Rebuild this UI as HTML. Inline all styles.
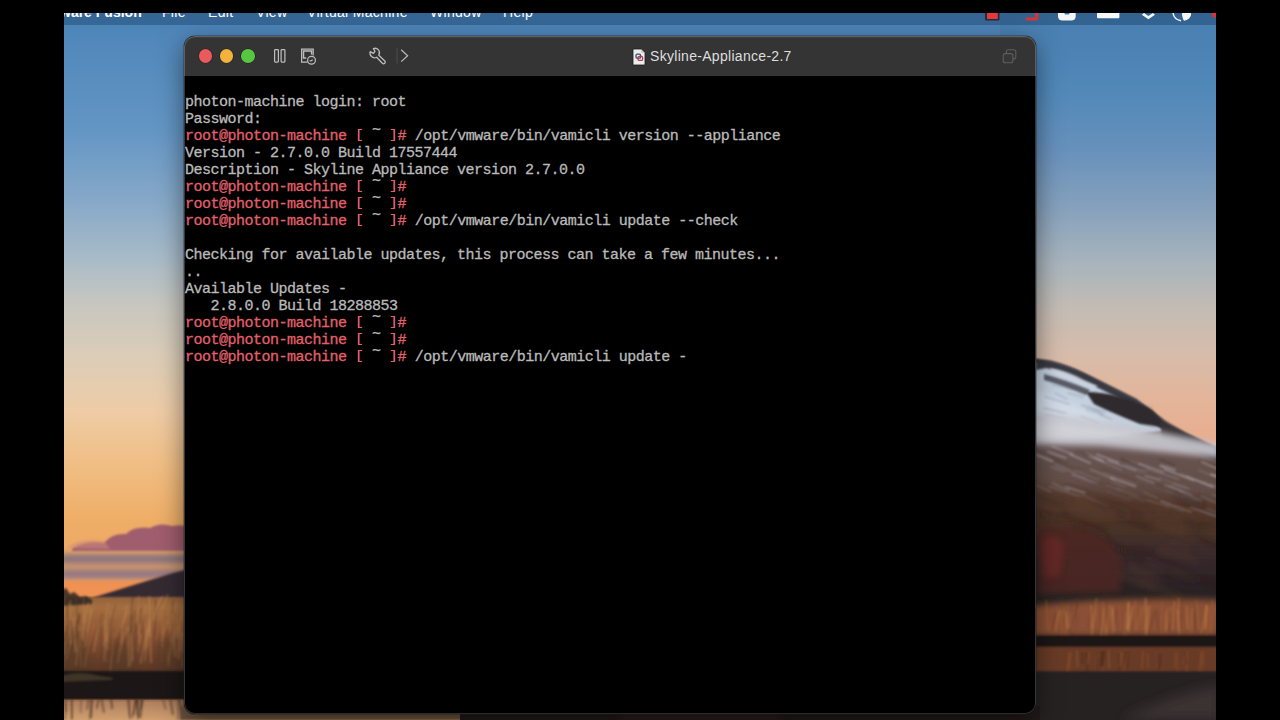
<!DOCTYPE html>
<html><head><meta charset="utf-8">
<style>
html,body{margin:0;padding:0;background:#000;width:1280px;height:720px;overflow:hidden;position:relative;}
.abs{position:absolute;}
.blk{position:absolute;background:#000;}
#menubar{position:absolute;left:64px;top:13px;width:1152px;height:11.5px;background:rgba(20,60,100,0.40);}
.mi{position:absolute;top:1.3px;font-family:"Liberation Sans",sans-serif;font-size:14px;letter-spacing:0.3px;line-height:22px;color:#fff;white-space:nowrap;}
#win{position:absolute;left:184px;top:36px;width:852px;height:678px;border-radius:11px;background:#000;overflow:hidden;
 box-shadow:0 0 0 0.5px rgba(20,30,40,0.6),0 8px 26px rgba(0,0,0,0.5);}
#tb{position:absolute;left:0;top:0;width:852px;height:40px;background:#343434;}
#ring{position:absolute;left:0;top:0;width:852px;height:678px;border-radius:11px;box-shadow:inset 0 0 0 1px rgba(255,255,255,0.17),inset 0 1px 0 1px rgba(255,255,255,0.06);}
.light{position:absolute;top:13.15px;width:13.5px;height:13.5px;border-radius:50%;box-shadow:0 0 0 0.6px rgba(0,0,0,0.35);}
#term{position:absolute;left:1px;top:58px;font-family:"Liberation Mono",monospace;font-size:15px;line-height:17px;letter-spacing:-0.5px;color:#bababa;white-space:pre;-webkit-text-stroke:0.3px currentColor;}
.t{position:relative;top:-6px;color:#bababa;}
.r{color:#e2606c;}
.br{display:inline-block;transform:scaleY(0.81);transform-origin:50% 1px;}
#title{position:absolute;left:466px;top:11px;font-family:"Liberation Sans",sans-serif;font-size:14px;letter-spacing:0.3px;line-height:18px;color:#dedede;white-space:nowrap;}
</style></head><body>
<svg id="wall" width="1280" height="720" viewBox="0 0 1280 720" style="position:absolute;left:0;top:0;">
<defs>
 <linearGradient id="gL" x1="0" y1="0" x2="0" y2="720" gradientUnits="userSpaceOnUse">
  <stop offset="0.0181" stop-color="#4a82b6"/>
  <stop offset="0.0417" stop-color="#4f86ba"/>
  <stop offset="0.1833" stop-color="#6496c4"/>
  <stop offset="0.2778" stop-color="#86a8c8"/>
  <stop offset="0.3542" stop-color="#a6bac8"/>
  <stop offset="0.4194" stop-color="#c6c6c0"/>
  <stop offset="0.4958" stop-color="#dccdb8"/>
  <stop offset="0.5708" stop-color="#eecca6"/>
  <stop offset="0.6556" stop-color="#f0bc80"/>
  <stop offset="0.7222" stop-color="#eeae68"/>
  <stop offset="0.8056" stop-color="#eea460"/>
 </linearGradient>
 <linearGradient id="gR" x1="0" y1="0" x2="0" y2="720" gradientUnits="userSpaceOnUse">
  <stop offset="0.0181" stop-color="#467cae"/>
  <stop offset="0.0417" stop-color="#4a80b2"/>
  <stop offset="0.1222" stop-color="#5088b8"/>
  <stop offset="0.2042" stop-color="#6690bc"/>
  <stop offset="0.2847" stop-color="#84a0bc"/>
  <stop offset="0.3653" stop-color="#a8b4bc"/>
  <stop offset="0.4306" stop-color="#c4bcb4"/>
  <stop offset="0.4958" stop-color="#d8bcaa"/>
  <stop offset="0.5597" stop-color="#e4b498"/>
  <stop offset="0.6083" stop-color="#e8ae90"/>
  <stop offset="0.6528" stop-color="#eaa888"/>
 </linearGradient>
 <linearGradient id="grassL" x1="0" y1="590" x2="0" y2="675" gradientUnits="userSpaceOnUse">
  <stop offset="0" stop-color="#84583a"/>
  <stop offset="0.2" stop-color="#a46e40"/>
  <stop offset="0.55" stop-color="#8a5234"/>
  <stop offset="1" stop-color="#5a3424"/>
 </linearGradient>
 <linearGradient id="reflL" x1="0" y1="695" x2="0" y2="720" gradientUnits="userSpaceOnUse">
  <stop offset="0" stop-color="#5a4030"/>
  <stop offset="0.3" stop-color="#b08060"/>
  <stop offset="1" stop-color="#d0a070"/>
 </linearGradient>
 <linearGradient id="mtnR" x1="0" y1="440" x2="0" y2="600" gradientUnits="userSpaceOnUse">
  <stop offset="0" stop-color="#6a5658"/>
  <stop offset="0.2" stop-color="#5e4236"/>
  <stop offset="0.5" stop-color="#4e3428"/>
  <stop offset="0.8" stop-color="#32262a"/>
  <stop offset="1" stop-color="#262022"/>
 </linearGradient>
 <linearGradient id="reflR" x1="0" y1="640" x2="0" y2="720" gradientUnits="userSpaceOnUse">
  <stop offset="0" stop-color="#1e1a18"/>
  <stop offset="0.15" stop-color="#6a4430"/>
  <stop offset="0.35" stop-color="#7a4c32"/>
  <stop offset="0.55" stop-color="#2e2624"/>
  <stop offset="1" stop-color="#3a3434"/>
 </linearGradient>
 <filter id="b1" x="-20%" y="-50%" width="140%" height="200%"><feGaussianBlur stdDeviation="1.2"/></filter>
 <filter id="b2" x="-20%" y="-50%" width="140%" height="200%"><feGaussianBlur stdDeviation="3"/></filter>
 <filter id="b3" x="-20%" y="-50%" width="140%" height="200%"><feGaussianBlur stdDeviation="6"/></filter>
</defs>
<!-- sky -->
<rect x="0" y="0" width="1000" height="720" fill="url(#gL)"/>
<rect x="1000" y="0" width="280" height="720" fill="url(#gR)"/>
<!-- LEFT clouds -->
<g filter="url(#b1)">
 <path d="M72 549 Q84 540 104 543 Q112 533 126 534 Q134 526 150 528 Q160 522 172 526 Q182 524 190 527 L190 551 L72 551 Z" fill="#9c5a6e" opacity="0.95"/>
 <path d="M66 548 Q80 537 104 541 L110 549 Z" fill="#cf8a7a" opacity="0.55"/>
</g>
<g filter="url(#b2)">
 <rect x="60" y="554" width="130" height="10" fill="#7a6c84" opacity="0.9"/>
 <rect x="60" y="569" width="130" height="10" fill="#84708a" opacity="0.9"/>
</g>
<rect x="60" y="581" width="130" height="16" fill="#f08c50" opacity="0.75" filter="url(#b1)"/>
<!-- LEFT mountain -->
<path d="M60 602 L92 598 Q130 586 160 577 Q175 572 190 569 L190 610 L60 610 Z" fill="#362a30" filter="url(#b1)"/>
<!-- LEFT grass -->
<rect x="60" y="597" width="130" height="78" fill="url(#grassL)" filter="url(#b1)"/>
<g fill="#4e3828" opacity="0.55" filter="url(#b3)">
<path d="M60 636 Q72 622 88 646 L94 675 L60 675 Z"/><path d="M104 648 Q120 628 136 652 L142 675 L100 675 Z"/><path d="M156 642 Q170 630 190 636 L190 675 L150 675 Z"/>
</g>
<path d="M60 600 L62 590 L66 588 L70 594 L74 592 L80 597 L86 596 L92 600 L92 604 L60 606 Z" fill="#2e2622" opacity="0.85" filter="url(#b1)"/>
<g stroke-width="1.3" filter="url(#b1)">
<path d="M140.5 663.6 Q143.2 643.6 149.7 623.7" stroke="#c89058" fill="none" opacity="0.48"/>
<path d="M128.8 667.0 Q128.6 647.3 128.3 627.6" stroke="#b8804a" fill="none" opacity="0.57"/>
<path d="M76.3 638.9 Q77.3 625.8 79.9 612.8" stroke="#4a3220" fill="none" opacity="0.34"/>
<path d="M154.1 634.9 Q156.6 622.6 162.3 610.3" stroke="#5a3c26" fill="none" opacity="0.31"/>
<path d="M162.4 635.0 Q161.8 617.3 160.2 599.6" stroke="#b8804a" fill="none" opacity="0.59"/>
<path d="M62.7 668.9 Q62.2 646.9 61.0 624.9" stroke="#c48a50" fill="none" opacity="0.35"/>
<path d="M183.1 652.5 Q182.8 634.0 182.0 615.6" stroke="#c89058" fill="none" opacity="0.32"/>
<path d="M183.6 629.9 Q184.1 619.6 185.4 609.3" stroke="#c48a50" fill="none" opacity="0.34"/>
<path d="M103.8 661.3 Q105.1 644.0 108.2 626.7" stroke="#c89058" fill="none" opacity="0.37"/>
<path d="M101.1 658.8 Q101.2 642.8 101.5 626.7" stroke="#5a3c26" fill="none" opacity="0.42"/>
<path d="M84.2 647.7 Q87.0 626.0 93.5 604.2" stroke="#a06a3c" fill="none" opacity="0.55"/>
<path d="M64.3 654.7 Q65.5 640.1 68.4 625.5" stroke="#b8804a" fill="none" opacity="0.41"/>
<path d="M151.2 662.8 Q150.5 640.9 148.8 618.9" stroke="#c48a50" fill="none" opacity="0.58"/>
<path d="M180.7 636.6 Q181.7 622.2 184.0 607.8" stroke="#7a5032" fill="none" opacity="0.41"/>
<path d="M136.3 654.4 Q136.4 639.8 136.5 625.2" stroke="#5a3c26" fill="none" opacity="0.58"/>
<path d="M73.5 642.9 Q76.1 625.3 82.3 607.6" stroke="#a06a3c" fill="none" opacity="0.35"/>
<path d="M150.5 634.8 Q150.6 616.3 150.8 597.7" stroke="#7a5032" fill="none" opacity="0.28"/>
<path d="M80.8 666.5 Q80.2 644.0 79.0 621.6" stroke="#b8804a" fill="none" opacity="0.28"/>
<path d="M137.7 651.7 Q139.6 641.3 144.0 630.9" stroke="#a06a3c" fill="none" opacity="0.54"/>
<path d="M119.4 632.3 Q122.1 621.6 128.2 610.9" stroke="#b8804a" fill="none" opacity="0.53"/>
<path d="M104.1 646.8 Q105.3 624.5 108.0 602.3" stroke="#c48a50" fill="none" opacity="0.47"/>
<path d="M161.3 629.1 Q160.7 613.7 159.4 598.3" stroke="#7a5032" fill="none" opacity="0.40"/>
<path d="M79.8 666.4 Q79.3 648.6 78.2 630.9" stroke="#4a3220" fill="none" opacity="0.41"/>
<path d="M123.5 655.2 Q123.5 639.2 123.6 623.2" stroke="#5a3c26" fill="none" opacity="0.57"/>
<path d="M76.2 660.2 Q75.7 643.5 74.7 626.9" stroke="#5a3c26" fill="none" opacity="0.55"/>
<path d="M84.7 646.6 Q85.8 630.1 88.4 613.7" stroke="#4a3220" fill="none" opacity="0.38"/>
<path d="M161.0 662.4 Q162.6 643.7 166.3 625.0" stroke="#7a5032" fill="none" opacity="0.36"/>
<path d="M132.5 661.6 Q132.4 641.2 132.2 620.7" stroke="#c89058" fill="none" opacity="0.50"/>
<path d="M182.6 632.1 Q184.9 619.8 190.5 607.6" stroke="#5a3c26" fill="none" opacity="0.44"/>
<path d="M93.6 652.4 Q95.8 636.7 101.0 620.9" stroke="#c89058" fill="none" opacity="0.49"/>
<path d="M106.9 633.6 Q109.7 619.3 116.1 605.0" stroke="#5a3c26" fill="none" opacity="0.37"/>
<path d="M168.2 666.0 Q171.1 647.4 177.9 628.8" stroke="#a06a3c" fill="none" opacity="0.43"/>
<path d="M128.7 641.6 Q131.4 621.1 137.8 600.6" stroke="#5a3c26" fill="none" opacity="0.35"/>
<path d="M71.9 651.3 Q73.3 636.0 76.6 620.8" stroke="#4a3220" fill="none" opacity="0.43"/>
<path d="M180.0 639.9 Q182.4 623.0 188.1 606.1" stroke="#a06a3c" fill="none" opacity="0.50"/>
<path d="M65.5 631.4 Q67.0 615.9 70.6 600.4" stroke="#c48a50" fill="none" opacity="0.52"/>
<path d="M84.7 667.4 Q87.7 645.1 94.5 622.7" stroke="#c48a50" fill="none" opacity="0.27"/>
<path d="M78.8 631.2 Q78.4 619.0 77.5 606.7" stroke="#b8804a" fill="none" opacity="0.40"/>
<path d="M106.2 642.3 Q105.9 631.4 105.1 620.5" stroke="#c89058" fill="none" opacity="0.57"/>
<path d="M62.1 637.2 Q62.6 623.7 63.8 610.2" stroke="#b8804a" fill="none" opacity="0.49"/>
<path d="M131.0 666.3 Q131.0 649.4 131.2 632.6" stroke="#a06a3c" fill="none" opacity="0.44"/>
<path d="M104.8 661.2 Q107.0 639.2 112.2 617.2" stroke="#5a3c26" fill="none" opacity="0.39"/>
<path d="M133.1 647.2 Q132.5 631.4 131.2 615.5" stroke="#5a3c26" fill="none" opacity="0.45"/>
<path d="M182.6 667.9 Q182.9 650.3 183.5 632.7" stroke="#c89058" fill="none" opacity="0.25"/>
<path d="M75.6 652.0 Q75.0 634.3 73.6 616.6" stroke="#c89058" fill="none" opacity="0.56"/>
<path d="M133.1 655.6 Q134.0 633.4 136.0 611.2" stroke="#5a3c26" fill="none" opacity="0.59"/>
<path d="M109.9 675.3 Q111.2 653.9 114.2 632.4" stroke="#a06a3c" fill="none" opacity="0.51"/>
<path d="M99.9 624.5 Q102.7 614.3 109.1 604.0" stroke="#a06a3c" fill="none" opacity="0.42"/>
<path d="M98.1 636.1 Q99.5 624.6 102.8 613.1" stroke="#5a3c26" fill="none" opacity="0.34"/>
<path d="M67.0 629.3 Q67.9 614.4 69.8 599.5" stroke="#4a3220" fill="none" opacity="0.35"/>
<path d="M179.8 651.4 Q179.8 638.3 179.6 625.3" stroke="#c48a50" fill="none" opacity="0.50"/>
<path d="M98.0 658.5 Q99.0 636.1 101.3 613.7" stroke="#7a5032" fill="none" opacity="0.46"/>
<path d="M155.7 637.7 Q155.7 618.2 155.9 598.7" stroke="#4a3220" fill="none" opacity="0.50"/>
<path d="M139.3 643.9 Q139.6 633.6 140.2 623.3" stroke="#c89058" fill="none" opacity="0.51"/>
<path d="M136.4 621.8 Q137.2 608.6 138.8 595.5" stroke="#b8804a" fill="none" opacity="0.56"/>
<path d="M130.7 634.0 Q131.3 614.3 132.7 594.6" stroke="#4a3220" fill="none" opacity="0.49"/>
<path d="M182.1 661.4 Q184.4 640.7 189.9 620.0" stroke="#5a3c26" fill="none" opacity="0.39"/>
<path d="M169.3 629.3 Q171.6 615.6 177.0 601.9" stroke="#b8804a" fill="none" opacity="0.36"/>
<path d="M62.4 659.7 Q63.9 642.4 67.5 625.2" stroke="#5a3c26" fill="none" opacity="0.57"/>
<path d="M80.0 646.9 Q80.9 630.0 82.9 613.1" stroke="#a06a3c" fill="none" opacity="0.44"/>
<path d="M115.6 636.9 Q117.5 626.3 121.9 615.7" stroke="#a06a3c" fill="none" opacity="0.54"/>
<path d="M161.8 641.2 Q163.6 630.9 167.9 620.5" stroke="#b8804a" fill="none" opacity="0.60"/>
<path d="M150.4 637.0 Q150.1 616.5 149.4 596.0" stroke="#c89058" fill="none" opacity="0.54"/>
<path d="M76.0 674.6 Q77.8 652.2 81.9 629.8" stroke="#5a3c26" fill="none" opacity="0.30"/>
<path d="M138.9 634.6 Q140.4 622.6 143.7 610.6" stroke="#b8804a" fill="none" opacity="0.44"/>
<path d="M145.2 650.8 Q146.4 637.3 149.2 623.8" stroke="#b8804a" fill="none" opacity="0.51"/>
<path d="M172.7 630.2 Q172.8 614.8 173.1 599.4" stroke="#4a3220" fill="none" opacity="0.42"/>
<path d="M106.5 663.1 Q105.9 641.7 104.5 620.2" stroke="#a06a3c" fill="none" opacity="0.30"/>
<path d="M141.5 657.0 Q142.7 635.6 145.3 614.2" stroke="#4a3220" fill="none" opacity="0.33"/>
<path d="M70.0 644.2 Q70.0 623.8 69.9 603.4" stroke="#c48a50" fill="none" opacity="0.53"/>
<path d="M170.8 641.9 Q170.2 627.0 168.6 612.1" stroke="#b8804a" fill="none" opacity="0.48"/>
<path d="M72.7 643.0 Q72.1 631.9 70.5 620.7" stroke="#4a3220" fill="none" opacity="0.41"/>
<path d="M111.1 656.6 Q110.4 634.5 108.6 612.5" stroke="#4a3220" fill="none" opacity="0.26"/>
<path d="M153.4 619.9 Q156.1 608.0 162.7 596.1" stroke="#c89058" fill="none" opacity="0.53"/>
<path d="M156.5 640.1 Q157.3 618.7 159.3 597.4" stroke="#c48a50" fill="none" opacity="0.30"/>
<path d="M140.7 634.0 Q140.9 621.1 141.4 608.2" stroke="#4a3220" fill="none" opacity="0.50"/>
<path d="M162.3 647.2 Q162.6 628.2 163.3 609.1" stroke="#a06a3c" fill="none" opacity="0.53"/>
<path d="M116.6 661.0 Q117.9 644.5 120.9 628.1" stroke="#4a3220" fill="none" opacity="0.33"/>
<path d="M84.7 617.5 Q84.3 607.0 83.4 596.5" stroke="#c48a50" fill="none" opacity="0.26"/>
<path d="M174.0 652.2 Q172.8 632.7 170.1 613.2" stroke="#5a3c26" fill="none" opacity="0.36"/>
<path d="M179.8 659.0 Q180.5 644.9 182.2 630.9" stroke="#c48a50" fill="none" opacity="0.30"/>
<path d="M82.0 638.6 Q84.5 623.8 90.4 609.0" stroke="#c48a50" fill="none" opacity="0.44"/>
<path d="M75.9 665.5 Q77.5 646.1 81.3 626.7" stroke="#b8804a" fill="none" opacity="0.42"/>
<path d="M66.0 660.2 Q68.8 645.6 75.2 631.0" stroke="#c89058" fill="none" opacity="0.26"/>
<path d="M119.5 651.9 Q121.6 639.9 126.5 628.0" stroke="#a06a3c" fill="none" opacity="0.35"/>
<path d="M147.0 647.3 Q146.6 635.2 145.8 623.2" stroke="#b8804a" fill="none" opacity="0.45"/>
<path d="M144.7 661.5 Q146.5 640.1 150.6 618.7" stroke="#c89058" fill="none" opacity="0.36"/>
<path d="M121.0 643.6 Q122.8 624.5 127.0 605.3" stroke="#c48a50" fill="none" opacity="0.52"/>
<path d="M84.1 623.4 Q85.5 612.9 88.7 602.4" stroke="#c89058" fill="none" opacity="0.59"/>
<path d="M62.8 635.9 Q63.3 616.2 64.5 596.4" stroke="#b8804a" fill="none" opacity="0.26"/>
<path d="M167.3 661.6 Q170.0 644.6 176.4 627.5" stroke="#c89058" fill="none" opacity="0.27"/>
<path d="M175.2 657.0 Q174.3 635.3 172.0 613.6" stroke="#c48a50" fill="none" opacity="0.48"/>
<path d="M124.7 646.5 Q127.0 635.9 132.3 625.3" stroke="#5a3c26" fill="none" opacity="0.36"/>
<path d="M68.5 639.8 Q68.0 617.6 67.0 595.5" stroke="#4a3220" fill="none" opacity="0.47"/>
<path d="M85.7 646.5 Q87.8 624.9 92.8 603.3" stroke="#b8804a" fill="none" opacity="0.44"/>
<path d="M178.1 659.4 Q177.8 638.6 177.1 617.9" stroke="#b8804a" fill="none" opacity="0.40"/>
<path d="M107.1 650.1 Q108.1 630.5 110.4 610.9" stroke="#c48a50" fill="none" opacity="0.50"/>
<path d="M177.0 637.5 Q179.3 621.9 184.6 606.3" stroke="#c48a50" fill="none" opacity="0.44"/>
<path d="M79.5 652.8 Q79.4 633.1 79.2 613.3" stroke="#5a3c26" fill="none" opacity="0.36"/>
<path d="M78.4 623.4 Q77.5 610.3 75.5 597.3" stroke="#5a3c26" fill="none" opacity="0.59"/>
<path d="M146.0 637.3 Q145.8 621.2 145.4 605.0" stroke="#c89058" fill="none" opacity="0.32"/>
<path d="M98.0 631.4 Q98.6 620.2 99.9 609.0" stroke="#a06a3c" fill="none" opacity="0.38"/>
<path d="M158.9 621.2 Q161.7 607.6 168.1 594.0" stroke="#c48a50" fill="none" opacity="0.45"/>
<path d="M117.7 663.1 Q120.5 644.9 127.1 626.7" stroke="#c89058" fill="none" opacity="0.27"/>
<path d="M115.9 638.4 Q117.0 618.3 119.7 598.3" stroke="#a06a3c" fill="none" opacity="0.27"/>
<path d="M83.3 641.4 Q83.3 623.0 83.3 604.5" stroke="#b8804a" fill="none" opacity="0.44"/>
<path d="M155.1 618.2 Q158.0 606.6 164.7 595.1" stroke="#7a5032" fill="none" opacity="0.38"/>
<path d="M170.3 667.3 Q170.1 649.6 169.6 632.0" stroke="#5a3c26" fill="none" opacity="0.29"/>
<path d="M87.3 632.4 Q88.7 620.4 92.0 608.3" stroke="#c48a50" fill="none" opacity="0.50"/>
<path d="M74.0 639.5 Q75.8 627.4 79.9 615.2" stroke="#5a3c26" fill="none" opacity="0.52"/>
</g>
<!-- LEFT log / reflection -->
<rect x="60" y="671" width="130" height="29" fill="#1e1812" filter="url(#b1)"/>
<path d="M60 676 Q80 670 100 676 Q120 678 110 680 L60 682 Z" fill="#6a5a3a" opacity="0.45" filter="url(#b1)"/>
<rect x="60" y="700" width="130" height="20" fill="url(#reflL)"/>
<g stroke-width="1.6" filter="url(#b1)">
<path d="M92.0 699 L89.8 719.0" stroke="#3a2418" opacity="0.52"/>
<path d="M135.2 699 L132.3 718.0" stroke="#3a2418" opacity="0.44"/>
<path d="M91.5 699 L91.3 718.0" stroke="#3a2418" opacity="0.52"/>
<path d="M142.5 699 L140.9 709.8" stroke="#2a1c14" opacity="0.67"/>
<path d="M111.1 699 L112.2 708.8" stroke="#2a1c14" opacity="0.62"/>
<path d="M136.5 699 L138.2 717.9" stroke="#4a3020" opacity="0.44"/>
<path d="M136.9 699 L138.2 719.1" stroke="#4a3020" opacity="0.49"/>
<path d="M162.9 699 L165.7 709.6" stroke="#4a3020" opacity="0.48"/>
<path d="M66.5 699 L64.8 719.6" stroke="#4a3020" opacity="0.50"/>
<path d="M141.0 699 L140.5 718.0" stroke="#4a3020" opacity="0.55"/>
<path d="M129.3 699 L129.8 718.9" stroke="#4a3020" opacity="0.59"/>
<path d="M179.0 699 L182.0 716.1" stroke="#4a3020" opacity="0.41"/>
<path d="M170.4 699 L172.9 714.8" stroke="#3a2418" opacity="0.60"/>
<path d="M88.6 699 L87.2 709.5" stroke="#3a2418" opacity="0.52"/>
<path d="M142.5 699 L140.0 717.6" stroke="#4a3020" opacity="0.49"/>
<path d="M81.0 699 L80.6 713.0" stroke="#4a3020" opacity="0.39"/>
<path d="M138.2 699 L137.5 715.0" stroke="#2a1c14" opacity="0.54"/>
<path d="M178.2 699 L178.2 720.0" stroke="#4a3020" opacity="0.46"/>
<path d="M71.7 699 L71.9 719.4" stroke="#3a2418" opacity="0.69"/>
<path d="M98.7 699 L96.7 708.5" stroke="#4a3020" opacity="0.65"/>
<path d="M101.5 699 L103.9 712.5" stroke="#2a1c14" opacity="0.51"/>
<path d="M127.5 699 L129.7 716.2" stroke="#3a2418" opacity="0.39"/>
<path d="M184.6 699 L183.2 715.6" stroke="#3a2418" opacity="0.60"/>
<path d="M180.0 699 L182.9 714.3" stroke="#4a3020" opacity="0.54"/>
<path d="M63.4 699 L66.4 711.8" stroke="#4a3020" opacity="0.48"/>
<path d="M136.2 699 L133.6 715.5" stroke="#2a1c14" opacity="0.51"/>
</g>
<!-- RIGHT mountain -->
<rect x="1030" y="560" width="190" height="180" fill="#2a2220"/>
<path d="M1030 358 L1051 361 Q1070 366 1086 374 L1136 399 L1161 418 L1186 433 L1220 450 L1220 620 L1030 620 Z" fill="url(#mtnR)" filter="url(#b1)"/>
<path d="M1034 362 L1051 362 Q1070 367 1086 376 L1136 400 L1161 419 L1170 430 L1100 438 L1034 436 Z" fill="#c4d0de" filter="url(#b1)"/>
<path d="M1034 390 Q1070 400 1120 428 L1034 434 Z" fill="#dfe5ee" opacity="0.5" filter="url(#b2)"/>
<path d="M1036 359 L1051 361 Q1070 366 1086 374 L1136 399 L1161 418 L1172 430 L1160 428 L1130 404 Q1100 388 1080 380 Q1060 370 1046 368 L1036 370 Z" fill="#2c2a30" opacity="0.9" filter="url(#b1)"/>
<path d="M1050 368 Q1066 370 1084 380 L1098 386 L1094 389 Q1072 380 1052 372 Z" fill="#d0d8e4" opacity="0.8" filter="url(#b1)"/>
<path d="M1044 374 Q1066 380 1090 390 L1086 395 Q1064 386 1044 380 Z" fill="#34343c" opacity="0.75" filter="url(#b1)"/>
<g stroke="#6a7080" stroke-width="1.2" opacity="0.35" filter="url(#b1)">
<path d="M1081.2 405.3 L1106.2 411.6"/>
<path d="M1086.8 406.3 L1101.4 412.9"/>
<path d="M1099.0 414.1 L1112.3 419.7"/>
<path d="M1045.1 414.8 L1066.8 419.0"/>
<path d="M1134.2 420.7 L1155.4 427.7"/>
<path d="M1051.7 384.6 L1071.1 388.9"/>
<path d="M1055.0 393.2 L1067.4 399.5"/>
<path d="M1080.1 416.0 L1099.3 423.2"/>
<path d="M1086.0 409.2 L1104.4 414.6"/>
<path d="M1135.8 421.8 L1159.5 429.4"/>
<path d="M1067.5 392.7 L1083.6 397.1"/>
<path d="M1112.6 399.2 L1136.5 405.1"/>
<path d="M1131.8 416.2 L1143.8 421.2"/>
<path d="M1127.0 401.9 L1152.8 407.8"/>
<path d="M1043.3 407.9 L1066.2 413.3"/>
<path d="M1044.7 396.6 L1070.2 404.4"/>
</g>
<path d="M1086 392 Q1120 392 1152 410 L1168 428 L1140 424 Q1110 412 1094 404 Z" fill="#2e2a2e" filter="url(#b1)"/>
<path d="M1160 420 L1186 433 L1220 449 L1220 462 L1162 438 Z" fill="#383034" filter="url(#b1)"/>
<path d="M1030 440 Q1120 448 1220 460 L1220 500 Q1120 490 1030 486 Z" fill="#6a5a58" opacity="0.6" filter="url(#b3)"/>
<g stroke-width="1.6" filter="url(#b1)">
<path d="M1052.4 458.3 L1068.4 463.3" stroke="#3e302c" opacity="0.31"/>
<path d="M1136.3 475.9 L1154.1 483.2" stroke="#a8a4ae" opacity="0.40"/>
<path d="M1102.9 470.3 L1136.7 480.4" stroke="#4e3a32" opacity="0.36"/>
<path d="M1198.1 469.7 L1220.0 479.0" stroke="#8a8088" opacity="0.45"/>
<path d="M1038.0 452.0 L1060.8 458.9" stroke="#4e3a32" opacity="0.37"/>
<path d="M1086.3 452.7 L1102.1 458.9" stroke="#a8a4ae" opacity="0.26"/>
<path d="M1100.0 481.4 L1116.6 487.8" stroke="#4e3a32" opacity="0.18"/>
<path d="M1103.4 482.0 L1123.6 488.7" stroke="#4e3a32" opacity="0.20"/>
<path d="M1066.1 484.2 L1098.9 495.0" stroke="#3e302c" opacity="0.33"/>
<path d="M1144.7 475.4 L1160.7 480.3" stroke="#d0ccd4" opacity="0.33"/>
<path d="M1163.9 468.9 L1194.3 480.8" stroke="#d0ccd4" opacity="0.43"/>
<path d="M1206.6 508.7 L1223.1 514.9" stroke="#8a8088" opacity="0.32"/>
<path d="M1146.7 468.5 L1179.1 479.2" stroke="#c0bcc6" opacity="0.27"/>
<path d="M1108.2 463.5 L1123.1 468.6" stroke="#4e3a32" opacity="0.45"/>
<path d="M1055.0 464.4 L1086.8 478.6" stroke="#8a8088" opacity="0.51"/>
<path d="M1129.2 500.3 L1155.0 511.6" stroke="#3e302c" opacity="0.33"/>
<path d="M1163.2 504.1 L1177.6 509.8" stroke="#3e302c" opacity="0.16"/>
<path d="M1089.1 456.1 L1104.6 461.8" stroke="#d0ccd4" opacity="0.51"/>
<path d="M1201.0 496.2 L1229.1 508.0" stroke="#d0ccd4" opacity="0.22"/>
<path d="M1160.2 500.8 L1191.6 512.2" stroke="#c0bcc6" opacity="0.32"/>
<path d="M1138.8 485.0 L1160.5 493.4" stroke="#4e3a32" opacity="0.16"/>
<path d="M1047.2 451.3 L1066.4 458.3" stroke="#d0ccd4" opacity="0.39"/>
<path d="M1169.7 485.6 L1192.5 495.3" stroke="#c0bcc6" opacity="0.25"/>
<path d="M1127.8 468.3 L1143.5 473.1" stroke="#8a8088" opacity="0.29"/>
<path d="M1178.2 490.3 L1201.9 500.7" stroke="#d0ccd4" opacity="0.21"/>
<path d="M1158.8 465.7 L1176.2 473.3" stroke="#8a8088" opacity="0.58"/>
<path d="M1124.7 464.6 L1146.8 472.1" stroke="#8a8088" opacity="0.40"/>
<path d="M1183.1 503.5 L1214.7 514.8" stroke="#4e3a32" opacity="0.33"/>
<path d="M1069.9 454.3 L1090.9 463.4" stroke="#c0bcc6" opacity="0.50"/>
<path d="M1210.5 474.1 L1227.9 480.5" stroke="#d0ccd4" opacity="0.57"/>
<path d="M1187.9 477.3 L1212.3 487.1" stroke="#8a8088" opacity="0.54"/>
<path d="M1216.6 483.4 L1232.1 488.1" stroke="#4e3a32" opacity="0.16"/>
<path d="M1164.6 484.6 L1184.8 493.1" stroke="#c0bcc6" opacity="0.28"/>
<path d="M1107.0 460.4 L1136.4 470.4" stroke="#a8a4ae" opacity="0.53"/>
<path d="M1217.0 466.6 L1233.1 472.7" stroke="#8a8088" opacity="0.53"/>
<path d="M1212.1 494.6 L1230.1 501.3" stroke="#a8a4ae" opacity="0.29"/>
<path d="M1173.5 483.7 L1188.2 488.6" stroke="#d0ccd4" opacity="0.26"/>
<path d="M1209.9 485.2 L1243.8 496.2" stroke="#8a8088" opacity="0.33"/>
<path d="M1046.6 492.1 L1075.0 501.2" stroke="#3e302c" opacity="0.19"/>
<path d="M1198.6 459.5 L1223.6 469.5" stroke="#4e3a32" opacity="0.53"/>
<path d="M1209.4 483.3 L1236.4 492.3" stroke="#8a8088" opacity="0.32"/>
<path d="M1181.7 503.9 L1198.1 509.4" stroke="#3e302c" opacity="0.35"/>
<path d="M1215.7 487.6 L1245.5 497.9" stroke="#8a8088" opacity="0.32"/>
<path d="M1096.2 454.1 L1119.0 462.8" stroke="#d0ccd4" opacity="0.42"/>
<path d="M1035.4 484.9 L1050.7 491.4" stroke="#a8a4ae" opacity="0.26"/>
<path d="M1160.5 501.5 L1183.9 512.1" stroke="#8a8088" opacity="0.25"/>
<path d="M1158.8 477.6 L1190.4 489.8" stroke="#8a8088" opacity="0.28"/>
<path d="M1072.1 474.1 L1091.9 482.2" stroke="#8a8088" opacity="0.31"/>
<path d="M1127.7 498.2 L1146.8 505.8" stroke="#4e3a32" opacity="0.19"/>
<path d="M1191.6 507.0 L1216.1 516.4" stroke="#a8a4ae" opacity="0.23"/>
<path d="M1051.7 446.2 L1073.3 454.4" stroke="#c0bcc6" opacity="0.43"/>
<path d="M1106.1 490.9 L1131.4 500.3" stroke="#8a8088" opacity="0.18"/>
<path d="M1206.9 482.9 L1239.3 496.5" stroke="#3e302c" opacity="0.20"/>
<path d="M1119.9 458.4 L1142.6 468.0" stroke="#3e302c" opacity="0.43"/>
<path d="M1050.6 466.8 L1065.2 471.8" stroke="#8a8088" opacity="0.52"/>
<path d="M1034.3 454.1 L1052.9 461.6" stroke="#d0ccd4" opacity="0.50"/>
<path d="M1076.4 473.1 L1100.4 482.4" stroke="#4e3a32" opacity="0.47"/>
<path d="M1166.4 491.3 L1197.9 500.9" stroke="#8a8088" opacity="0.23"/>
<path d="M1130.6 461.0 L1148.7 468.2" stroke="#8a8088" opacity="0.33"/>
<path d="M1071.1 474.8 L1096.8 483.1" stroke="#8a8088" opacity="0.47"/>
<path d="M1096.0 459.0 L1122.1 470.3" stroke="#a8a4ae" opacity="0.33"/>
<path d="M1219.7 505.4 L1236.4 511.1" stroke="#8a8088" opacity="0.17"/>
<path d="M1103.7 472.4 L1136.5 484.9" stroke="#8a8088" opacity="0.29"/>
<path d="M1106.5 485.1 L1120.9 489.9" stroke="#8a8088" opacity="0.22"/>
<path d="M1186.0 476.1 L1214.1 487.2" stroke="#d0ccd4" opacity="0.43"/>
<path d="M1160.3 465.2 L1175.7 470.0" stroke="#c0bcc6" opacity="0.52"/>
<path d="M1146.5 499.7 L1170.2 507.5" stroke="#c0bcc6" opacity="0.19"/>
<path d="M1189.6 507.9 L1222.2 518.1" stroke="#c0bcc6" opacity="0.18"/>
<path d="M1159.4 459.5 L1175.3 465.2" stroke="#3e302c" opacity="0.43"/>
<path d="M1111.7 481.4 L1126.0 487.2" stroke="#a8a4ae" opacity="0.19"/>
<path d="M1116.3 488.7 L1138.4 496.0" stroke="#a8a4ae" opacity="0.17"/>
<path d="M1180.5 473.7 L1196.2 480.4" stroke="#8a8088" opacity="0.58"/>
<path d="M1138.2 463.3 L1163.9 472.3" stroke="#d0ccd4" opacity="0.35"/>
<path d="M1052.1 483.1 L1069.3 490.7" stroke="#a8a4ae" opacity="0.33"/>
<path d="M1197.2 493.8 L1226.5 506.0" stroke="#3e302c" opacity="0.19"/>
<path d="M1065.1 487.0 L1085.1 493.3" stroke="#d0ccd4" opacity="0.35"/>
<path d="M1201.5 461.9 L1221.0 470.6" stroke="#d0ccd4" opacity="0.37"/>
<path d="M1155.4 483.8 L1180.0 492.6" stroke="#3e302c" opacity="0.28"/>
<path d="M1163.2 494.1 L1196.8 504.3" stroke="#4e3a32" opacity="0.17"/>
<path d="M1075.0 470.2 L1099.1 480.2" stroke="#8a8088" opacity="0.38"/>
<path d="M1048.7 458.2 L1080.8 470.5" stroke="#4e3a32" opacity="0.40"/>
<path d="M1128.9 495.2 L1144.9 501.1" stroke="#8a8088" opacity="0.17"/>
<path d="M1143.5 492.2 L1158.4 498.7" stroke="#a8a4ae" opacity="0.23"/>
<path d="M1214.3 503.4 L1239.2 513.0" stroke="#3e302c" opacity="0.34"/>
<path d="M1109.9 477.5 L1135.9 486.7" stroke="#d0ccd4" opacity="0.42"/>
<path d="M1081.3 495.1 L1108.5 506.3" stroke="#c0bcc6" opacity="0.15"/>
<path d="M1076.6 450.3 L1093.7 457.4" stroke="#3e302c" opacity="0.27"/>
<path d="M1089.9 469.3 L1115.5 479.7" stroke="#d0ccd4" opacity="0.28"/>
<path d="M1202.1 481.0 L1225.6 491.5" stroke="#a8a4ae" opacity="0.16"/>
<path d="M1048.7 486.2 L1080.9 496.5" stroke="#a8a4ae" opacity="0.27"/>
</g>
<g stroke-width="2.5" filter="url(#b2)">
<path d="M1051.9 552.4 L1083.3 563.4" stroke="#5a3c30" opacity="0.56"/>
<path d="M1097.8 505.5 L1126.9 515.7" stroke="#5a3c30" opacity="0.50"/>
<path d="M1116.6 516.2 L1151.1 528.3" stroke="#221a1a" opacity="0.41"/>
<path d="M1171.3 571.5 L1194.8 579.7" stroke="#6a4434" opacity="0.52"/>
<path d="M1075.3 501.4 L1117.6 516.2" stroke="#6a4434" opacity="0.38"/>
<path d="M1145.9 562.5 L1183.3 575.6" stroke="#5a3c30" opacity="0.49"/>
<path d="M1173.1 509.0 L1199.4 518.2" stroke="#5a3c30" opacity="0.56"/>
<path d="M1037.5 496.1 L1064.3 505.4" stroke="#221a1a" opacity="0.31"/>
<path d="M1037.2 512.3 L1064.2 521.7" stroke="#2a2020" opacity="0.57"/>
<path d="M1060.6 513.5 L1105.1 529.1" stroke="#221a1a" opacity="0.44"/>
<path d="M1070.0 524.4 L1108.6 537.9" stroke="#2a2020" opacity="0.54"/>
<path d="M1115.0 572.2 L1155.9 586.5" stroke="#5a3c30" opacity="0.43"/>
<path d="M1172.0 529.0 L1195.8 537.3" stroke="#5a3c30" opacity="0.50"/>
<path d="M1217.9 522.5 L1251.7 534.3" stroke="#5a3c30" opacity="0.43"/>
<path d="M1100.2 499.7 L1142.0 514.4" stroke="#2a2020" opacity="0.46"/>
<path d="M1112.1 546.8 L1152.5 560.9" stroke="#221a1a" opacity="0.39"/>
<path d="M1177.3 497.6 L1202.7 506.5" stroke="#2a2020" opacity="0.51"/>
<path d="M1124.0 566.4 L1152.2 576.3" stroke="#5a3c30" opacity="0.37"/>
<path d="M1154.9 522.7 L1197.5 537.6" stroke="#6a4434" opacity="0.51"/>
<path d="M1138.2 581.9 L1181.7 597.1" stroke="#6a4434" opacity="0.43"/>
<path d="M1182.6 520.5 L1210.5 530.3" stroke="#221a1a" opacity="0.59"/>
<path d="M1168.7 541.6 L1190.8 549.4" stroke="#6a4434" opacity="0.31"/>
<path d="M1158.6 548.5 L1198.5 562.4" stroke="#6a4434" opacity="0.54"/>
<path d="M1132.7 573.6 L1166.8 585.6" stroke="#5a3c30" opacity="0.33"/>
<path d="M1116.3 575.5 L1156.6 589.6" stroke="#5a3c30" opacity="0.45"/>
<path d="M1133.4 546.7 L1177.5 562.2" stroke="#221a1a" opacity="0.32"/>
<path d="M1133.9 568.8 L1156.0 576.5" stroke="#2a2020" opacity="0.38"/>
<path d="M1050.0 521.4 L1070.7 528.6" stroke="#5a3c30" opacity="0.33"/>
<path d="M1185.1 532.2 L1222.9 545.4" stroke="#221a1a" opacity="0.53"/>
<path d="M1129.1 566.5 L1159.0 576.9" stroke="#6a4434" opacity="0.54"/>
<path d="M1093.3 503.7 L1125.5 514.9" stroke="#2a2020" opacity="0.51"/>
<path d="M1203.8 531.1 L1244.5 545.3" stroke="#6a4434" opacity="0.56"/>
<path d="M1183.1 573.4 L1225.3 588.2" stroke="#2a2020" opacity="0.46"/>
<path d="M1164.9 570.2 L1195.5 580.9" stroke="#221a1a" opacity="0.57"/>
<path d="M1076.7 506.2 L1112.6 518.8" stroke="#5a3c30" opacity="0.40"/>
<path d="M1104.0 542.9 L1130.8 552.3" stroke="#2a2020" opacity="0.44"/>
<path d="M1168.8 520.3 L1192.7 528.7" stroke="#5a3c30" opacity="0.57"/>
<path d="M1173.1 491.7 L1205.1 502.9" stroke="#2a2020" opacity="0.39"/>
<path d="M1067.5 525.9 L1102.3 538.1" stroke="#221a1a" opacity="0.48"/>
<path d="M1072.6 508.5 L1099.6 518.0" stroke="#5a3c30" opacity="0.57"/>
</g>
<path d="M1030 414 Q1080 416 1130 426 Q1170 434 1220 444 L1220 458 Q1160 452 1100 446 L1030 444 Z" fill="#c6c6ce" opacity="0.92" filter="url(#b2)"/>
<path d="M1030 420 Q1090 424 1150 438 L1030 440 Z" fill="#d8d8de" opacity="0.6" filter="url(#b2)"/>
<path d="M1038 530 Q1060 522 1090 530 Q1114 542 1122 562 L1120 592 L1038 594 Z" fill="#4e2622" opacity="0.85" filter="url(#b2)"/>
<path d="M1042 540 Q1052 530 1064 544 L1060 576 L1044 578 Z" fill="#7a2a2c" opacity="0.5" filter="url(#b2)"/>
<g filter="url(#b1)">
<path d="M1030 606 Q1120 596 1220 600 L1220 636 L1030 636 Z" fill="#8a5034" filter="url(#b2)"/>
<g stroke-width="1.3">
<path d="M1206.3 635.5 L1208.3 607.0" stroke="#a86436" opacity="0.37"/>
<path d="M1106.9 633.3 L1110.8 612.3" stroke="#b8743e" opacity="0.37"/>
<path d="M1073.1 635.6 L1077.3 597.8" stroke="#5a3220" opacity="0.54"/>
<path d="M1179.8 634.3 L1177.3 609.4" stroke="#c88448" opacity="0.51"/>
<path d="M1194.6 631.6 L1193.8 611.5" stroke="#5a3220" opacity="0.41"/>
<path d="M1061.3 630.6 L1060.6 599.5" stroke="#6e3c24" opacity="0.25"/>
<path d="M1170.0 632.1 L1167.4 606.9" stroke="#6e3c24" opacity="0.47"/>
<path d="M1032.3 634.8 L1036.7 610.1" stroke="#b8743e" opacity="0.32"/>
<path d="M1146.4 635.1 L1149.6 605.4" stroke="#b8743e" opacity="0.53"/>
<path d="M1141.1 630.4 L1145.2 610.7" stroke="#5a3220" opacity="0.27"/>
<path d="M1158.9 631.5 L1156.2 609.5" stroke="#5a3220" opacity="0.38"/>
<path d="M1061.3 630.5 L1061.1 610.3" stroke="#b8743e" opacity="0.39"/>
<path d="M1217.5 628.5 L1215.2 607.7" stroke="#c88448" opacity="0.24"/>
<path d="M1105.3 635.7 L1109.8 604.4" stroke="#d09050" opacity="0.36"/>
<path d="M1192.6 631.8 L1192.3 608.4" stroke="#b8743e" opacity="0.36"/>
<path d="M1033.9 634.4 L1032.8 612.9" stroke="#6e3c24" opacity="0.25"/>
<path d="M1148.8 634.0 L1154.4 612.0" stroke="#5a3220" opacity="0.39"/>
<path d="M1048.2 631.0 L1046.2 600.0" stroke="#a86436" opacity="0.53"/>
<path d="M1136.7 630.7 L1141.1 608.6" stroke="#b8743e" opacity="0.24"/>
<path d="M1147.6 633.0 L1146.3 599.1" stroke="#c88448" opacity="0.34"/>
<path d="M1187.7 628.7 L1186.7 606.5" stroke="#c88448" opacity="0.55"/>
<path d="M1112.7 630.7 L1117.1 609.3" stroke="#6e3c24" opacity="0.25"/>
<path d="M1070.2 633.5 L1071.6 599.4" stroke="#5a3220" opacity="0.42"/>
<path d="M1167.2 630.5 L1171.3 606.8" stroke="#c88448" opacity="0.43"/>
<path d="M1145.2 630.6 L1145.3 597.3" stroke="#d09050" opacity="0.35"/>
<path d="M1135.6 630.7 L1135.3 600.3" stroke="#b8743e" opacity="0.41"/>
<path d="M1061.5 635.2 L1063.4 609.3" stroke="#a86436" opacity="0.41"/>
<path d="M1127.5 629.6 L1132.9 606.2" stroke="#d09050" opacity="0.45"/>
<path d="M1206.1 628.2 L1209.0 606.1" stroke="#b8743e" opacity="0.25"/>
<path d="M1120.9 630.7 L1118.7 603.7" stroke="#a86436" opacity="0.29"/>
<path d="M1196.2 633.8 L1195.4 604.2" stroke="#6e3c24" opacity="0.39"/>
<path d="M1136.3 630.1 L1141.5 606.0" stroke="#a86436" opacity="0.41"/>
<path d="M1054.8 630.3 L1059.9 610.2" stroke="#c88448" opacity="0.47"/>
<path d="M1099.5 632.8 L1103.8 599.7" stroke="#5a3220" opacity="0.21"/>
<path d="M1065.5 635.5 L1068.4 612.8" stroke="#a86436" opacity="0.46"/>
<path d="M1189.6 632.9 L1192.4 611.5" stroke="#b8743e" opacity="0.26"/>
<path d="M1108.6 632.2 L1106.7 597.5" stroke="#5a3220" opacity="0.26"/>
<path d="M1128.7 632.5 L1128.7 601.2" stroke="#d09050" opacity="0.47"/>
<path d="M1166.2 631.2 L1167.7 609.6" stroke="#b8743e" opacity="0.36"/>
<path d="M1108.5 633.5 L1112.3 607.0" stroke="#a86436" opacity="0.37"/>
<path d="M1217.0 634.8 L1217.7 610.4" stroke="#5a3220" opacity="0.24"/>
<path d="M1053.3 630.6 L1055.0 612.0" stroke="#5a3220" opacity="0.52"/>
<path d="M1091.6 633.8 L1096.7 597.9" stroke="#d09050" opacity="0.33"/>
<path d="M1091.9 635.1 L1096.8 609.6" stroke="#c88448" opacity="0.24"/>
<path d="M1115.1 631.2 L1112.6 605.0" stroke="#d09050" opacity="0.24"/>
<path d="M1201.3 633.3 L1206.7 605.7" stroke="#b8743e" opacity="0.55"/>
<path d="M1167.9 631.0 L1169.8 610.9" stroke="#6e3c24" opacity="0.48"/>
<path d="M1073.3 632.5 L1078.4 608.9" stroke="#b8743e" opacity="0.38"/>
<path d="M1056.2 632.6 L1057.3 611.1" stroke="#a86436" opacity="0.29"/>
<path d="M1087.7 628.5 L1092.7 602.2" stroke="#6e3c24" opacity="0.34"/>
<path d="M1098.3 628.4 L1095.6 606.4" stroke="#a86436" opacity="0.31"/>
<path d="M1124.7 635.8 L1126.0 611.9" stroke="#c88448" opacity="0.27"/>
<path d="M1191.8 628.5 L1191.6 608.1" stroke="#a86436" opacity="0.51"/>
<path d="M1035.0 633.6 L1037.0 607.2" stroke="#6e3c24" opacity="0.42"/>
<path d="M1067.6 628.4 L1065.6 611.1" stroke="#d09050" opacity="0.49"/>
<path d="M1210.8 631.4 L1215.7 601.4" stroke="#a86436" opacity="0.44"/>
<path d="M1206.4 628.6 L1205.4 604.1" stroke="#a86436" opacity="0.24"/>
<path d="M1160.6 633.8 L1162.1 601.3" stroke="#a86436" opacity="0.48"/>
<path d="M1101.3 635.1 L1103.6 607.6" stroke="#c88448" opacity="0.54"/>
<path d="M1198.6 629.8 L1196.8 599.9" stroke="#d09050" opacity="0.23"/>
<path d="M1214.8 632.2 L1216.6 604.0" stroke="#b8743e" opacity="0.20"/>
<path d="M1141.1 631.4 L1143.2 605.6" stroke="#c88448" opacity="0.30"/>
<path d="M1172.6 630.2 L1174.5 600.9" stroke="#c88448" opacity="0.48"/>
<path d="M1060.0 633.0 L1065.3 611.4" stroke="#6e3c24" opacity="0.33"/>
<path d="M1204.8 629.4 L1206.8 605.0" stroke="#d09050" opacity="0.52"/>
<path d="M1091.7 628.3 L1091.3 604.7" stroke="#d09050" opacity="0.44"/>
<path d="M1128.8 629.4 L1132.8 612.2" stroke="#c88448" opacity="0.24"/>
<path d="M1113.0 632.4 L1112.3 607.7" stroke="#d09050" opacity="0.48"/>
<path d="M1075.9 629.8 L1078.1 604.8" stroke="#5a3220" opacity="0.29"/>
<path d="M1069.7 628.4 L1070.7 612.5" stroke="#c88448" opacity="0.31"/>
<path d="M1145.1 634.4 L1146.7 606.7" stroke="#d09050" opacity="0.29"/>
<path d="M1180.5 635.3 L1182.6 598.2" stroke="#6e3c24" opacity="0.40"/>
<path d="M1166.3 628.4 L1167.2 607.0" stroke="#d09050" opacity="0.31"/>
<path d="M1147.5 630.1 L1149.8 605.4" stroke="#b8743e" opacity="0.43"/>
<path d="M1127.0 630.0 L1128.4 603.1" stroke="#d09050" opacity="0.49"/>
<path d="M1178.3 631.3 L1178.6 598.0" stroke="#c88448" opacity="0.45"/>
<path d="M1210.0 634.0 L1212.4 599.1" stroke="#c88448" opacity="0.25"/>
<path d="M1116.7 628.3 L1115.9 608.9" stroke="#6e3c24" opacity="0.25"/>
<path d="M1105.1 631.4 L1102.8 601.8" stroke="#b8743e" opacity="0.44"/>
<path d="M1165.4 632.9 L1165.0 612.6" stroke="#b8743e" opacity="0.39"/>
</g>
<rect x="1030" y="635" width="190" height="13" fill="#1c1814"/>
<rect x="1030" y="647" width="190" height="26" fill="#683a26"/>
<g stroke-width="1.5">
<path d="M1077.0 650.3 L1077.6 667.1" stroke="#9a5a34" opacity="0.58"/>
<path d="M1203.7 650.2 L1203.3 670.5" stroke="#8a4a2a" opacity="0.32"/>
<path d="M1095.8 651.9 L1095.5 672.4" stroke="#8a4a2a" opacity="0.41"/>
<path d="M1177.3 651.7 L1177.9 671.9" stroke="#8a4a2a" opacity="0.54"/>
<path d="M1121.3 650.9 L1120.5 667.1" stroke="#9a5a34" opacity="0.43"/>
<path d="M1216.8 653.5 L1217.5 667.8" stroke="#8a4a2a" opacity="0.32"/>
<path d="M1160.6 653.8 L1158.9 669.2" stroke="#3a2418" opacity="0.52"/>
<path d="M1127.3 651.1 L1127.1 665.5" stroke="#8a4a2a" opacity="0.58"/>
<path d="M1098.9 652.9 L1095.5 664.2" stroke="#8a4a2a" opacity="0.40"/>
<path d="M1103.5 653.4 L1103.2 666.6" stroke="#a05530" opacity="0.56"/>
<path d="M1156.5 651.6 L1157.0 664.4" stroke="#3a2418" opacity="0.35"/>
<path d="M1142.7 650.8 L1142.3 668.8" stroke="#a05530" opacity="0.51"/>
<path d="M1128.2 651.3 L1127.4 667.8" stroke="#3a2418" opacity="0.56"/>
<path d="M1187.2 651.6 L1186.9 672.7" stroke="#9a5a34" opacity="0.37"/>
<path d="M1086.3 652.4 L1087.5 672.5" stroke="#3a2418" opacity="0.52"/>
<path d="M1121.8 653.2 L1118.0 667.0" stroke="#a05530" opacity="0.50"/>
<path d="M1202.9 652.2 L1202.8 665.2" stroke="#8a4a2a" opacity="0.53"/>
<path d="M1101.6 650.4 L1101.0 667.9" stroke="#3a2418" opacity="0.32"/>
<path d="M1103.3 651.1 L1101.1 666.2" stroke="#3a2418" opacity="0.58"/>
<path d="M1069.6 651.4 L1067.3 669.2" stroke="#8a4a2a" opacity="0.52"/>
<path d="M1200.8 651.9 L1201.3 672.5" stroke="#8a4a2a" opacity="0.39"/>
<path d="M1202.1 650.5 L1198.7 673.1" stroke="#9a5a34" opacity="0.38"/>
<path d="M1102.2 651.9 L1102.2 666.5" stroke="#3a2418" opacity="0.31"/>
<path d="M1096.6 652.3 L1097.0 670.7" stroke="#3a2418" opacity="0.36"/>
<path d="M1119.3 653.8 L1119.1 669.8" stroke="#3a2418" opacity="0.58"/>
<path d="M1175.5 652.5 L1175.0 668.2" stroke="#a05530" opacity="0.38"/>
<path d="M1186.3 651.5 L1182.8 664.4" stroke="#9a5a34" opacity="0.34"/>
<path d="M1126.3 652.0 L1125.5 664.2" stroke="#3a2418" opacity="0.48"/>
<path d="M1082.2 652.7 L1082.8 664.0" stroke="#3a2418" opacity="0.46"/>
<path d="M1105.3 652.2 L1102.2 671.7" stroke="#8a4a2a" opacity="0.32"/>
<path d="M1185.2 651.1 L1186.5 664.2" stroke="#3a2418" opacity="0.54"/>
<path d="M1070.7 652.7 L1066.9 672.2" stroke="#9a5a34" opacity="0.35"/>
<path d="M1147.6 653.2 L1147.9 668.1" stroke="#9a5a34" opacity="0.41"/>
<path d="M1156.3 650.9 L1156.8 667.2" stroke="#9a5a34" opacity="0.35"/>
<path d="M1127.6 653.5 L1123.6 672.2" stroke="#8a4a2a" opacity="0.57"/>
<path d="M1089.7 652.0 L1087.6 664.4" stroke="#9a5a34" opacity="0.49"/>
<path d="M1108.8 650.2 L1109.2 669.1" stroke="#9a5a34" opacity="0.54"/>
<path d="M1105.0 651.5 L1102.9 665.8" stroke="#3a2418" opacity="0.56"/>
<path d="M1070.1 652.3 L1069.6 671.1" stroke="#8a4a2a" opacity="0.49"/>
<path d="M1186.6 650.5 L1186.3 670.7" stroke="#8a4a2a" opacity="0.37"/>
</g>
<rect x="1030" y="671" width="190" height="70" fill="#282220"/>
</g>
<path d="M1120 720 Q1170 695 1220 685 L1220 720 Z" fill="#3a3230" filter="url(#b3)"/>
<!-- bottom strip under window -->
<rect x="180" y="706" width="290" height="14" fill="#6e5440" filter="url(#b1)"/>
<rect x="460" y="706" width="580" height="14" fill="#221a1a"/>
<rect x="620" y="712" width="160" height="8" fill="#3a2020" opacity="0.6" filter="url(#b2)"/>
</svg>
<div id="menubar"></div>
<div class="mi" style="left:39px;font-weight:bold;letter-spacing:0;">VMware Fusion</div>
<div class="mi" style="left:162px;">File</div>
<div class="mi" style="left:208px;">Edit</div>
<div class="mi" style="left:256px;">View</div>
<div class="mi" style="left:307px;">Virtual Machine</div>
<div class="mi" style="left:430px;">Window</div>
<div class="mi" style="left:503px;">Help</div>
<svg width="1280" height="30" style="position:absolute;left:0;top:0;">
  <rect x="985" y="9" width="14.5" height="11.5" rx="1.5" fill="#2a2a30"/>
  <rect x="987" y="9" width="10.8" height="10" fill="#e63a42"/>
  <path d="M1025.6 17.6 H1035 V9 H1038.3 V18.8 Q1038.3 20.6 1036.5 20.6 H1025.6 Z" fill="#d83434"/>
  <path d="M1058 9 H1075.7 V16 Q1075.7 20.6 1071 20.6 H1062.7 Q1058 20.6 1058 16 Z" fill="#f4f6f8"/>
  <rect x="1064.5" y="9" width="5" height="5.5" rx="1" fill="#3a76ae"/>
  <rect x="1097" y="9" width="22.4" height="9.2" rx="1" fill="#f6f8fa"/>
  <path d="M1141.8 14.8 L1144 13 L1148.4 16 L1152.8 13 L1155 14.8 L1148.4 19.2 Z" fill="#f4f6f8"/>
  <path d="M1173 13 Q1174 19.5 1181 20.7" fill="none" stroke="#f4f6f8" stroke-width="1.5"/>
  <path d="M1182 9 H1191 V15 Q1190 19.5 1184 20.7 Q1181.5 17 1182 9 Z" fill="#f4f6f8"/>
  <rect x="1212" y="9" width="6" height="8.5" rx="2" fill="#d83434"/>
</svg>
<div id="win">
  <div id="tb">
    <div class="light" style="left:14.5px;background:#ea5a5c;"></div>
    <div class="light" style="left:35.75px;background:#f1b33e;"></div>
    <div class="light" style="left:57px;background:#57c641;"></div>
    <svg width="852" height="40" style="position:absolute;left:0;top:0px;" fill="none" stroke="#bdbdbd" stroke-width="1.25">
      <rect x="90.6" y="13.6" width="3.8" height="12.4" rx="0.8"/>
      <rect x="97.1" y="13.6" width="3.8" height="12.4" rx="0.8"/>
      <path d="M123.5 26 H117.6 V13.2 H129.2 V19.5"/>
      <path d="M122.2 22 H119.5 V15.1 H127.6 V18.5" stroke-width="1.5"/>
      <circle cx="127.5" cy="24.3" r="3.9"/>
      <path d="M125.6 24.6 Q127 25.6 128.6 23.6" stroke-width="1.1"/>
      <path d="M186.3 15.6 A4.5 4.5 0 0 0 192.6 21.2 L198.4 27.2 A1.6 1.6 0 0 0 200.8 25 L194.8 19.2 A4.5 4.5 0 0 0 189.4 12.6 L191 15.4 L189.4 17.4 Z" stroke-linejoin="round"/>
      <path d="M213 12.3 V27.5" stroke="#4c4c4c" stroke-width="1"/>
      <path d="M217.2 13.8 L223.6 19.7 L217.2 25.6" stroke-width="1.2"/>
      <rect x="822.3" y="13.8" width="9.5" height="9.2" rx="2" stroke="#5e5e5e" stroke-width="1.1"/>
      <rect x="819.2" y="17.6" width="9.7" height="9.2" rx="2" fill="#373737" stroke="#5e5e5e" stroke-width="1.1"/>
    </svg>
    <svg width="14" height="18" style="position:absolute;left:448px;top:11.5px;">
      <path d="M1 1 H9 L13 5 V17 H1 Z" fill="#ececec" stroke="#1a1a1a" stroke-width="0.8"/>
      <path d="M9 1 V5 H13" fill="#cfcfcf" stroke="none"/>
      <rect x="4" y="6.2" width="4.6" height="4" rx="1.2" fill="none" stroke="#3a4a7a" stroke-width="1.3"/>
      <rect x="6" y="8.4" width="4.6" height="4" rx="1.2" fill="none" stroke="#b04050" stroke-width="1.3"/>
    </svg>
    <div id="title">Skyline-Appliance-2.7</div>
  </div>
<div id="term">photon-machine login: root
Password:
<span class="r">root@photon-machine <span class="br">[</span> <span class="t">~</span> <span class="br">]</span>#</span> /opt/vmware/bin/vamicli version --appliance
Version - 2.7.0.0 Build 17557444
Description - Skyline Appliance version 2.7.0.0
<span class="r">root@photon-machine <span class="br">[</span> <span class="t">~</span> <span class="br">]</span>#</span>
<span class="r">root@photon-machine <span class="br">[</span> <span class="t">~</span> <span class="br">]</span>#</span>
<span class="r">root@photon-machine <span class="br">[</span> <span class="t">~</span> <span class="br">]</span>#</span> /opt/vmware/bin/vamicli update --check

Checking for available updates, this process can take a few minutes...
..
Available Updates -
   2.8.0.0 Build 18288853
<span class="r">root@photon-machine <span class="br">[</span> <span class="t">~</span> <span class="br">]</span>#</span>
<span class="r">root@photon-machine <span class="br">[</span> <span class="t">~</span> <span class="br">]</span>#</span>
<span class="r">root@photon-machine <span class="br">[</span> <span class="t">~</span> <span class="br">]</span>#</span> /opt/vmware/bin/vamicli update -</div>
<div id="ring"></div>
</div>
<div class="blk" style="left:0;top:0;width:1280px;height:13px;"></div>
<div class="blk" style="left:0;top:0;width:64px;height:720px;"></div>
<div class="blk" style="left:1216px;top:0;width:64px;height:720px;"></div>
</body></html>
